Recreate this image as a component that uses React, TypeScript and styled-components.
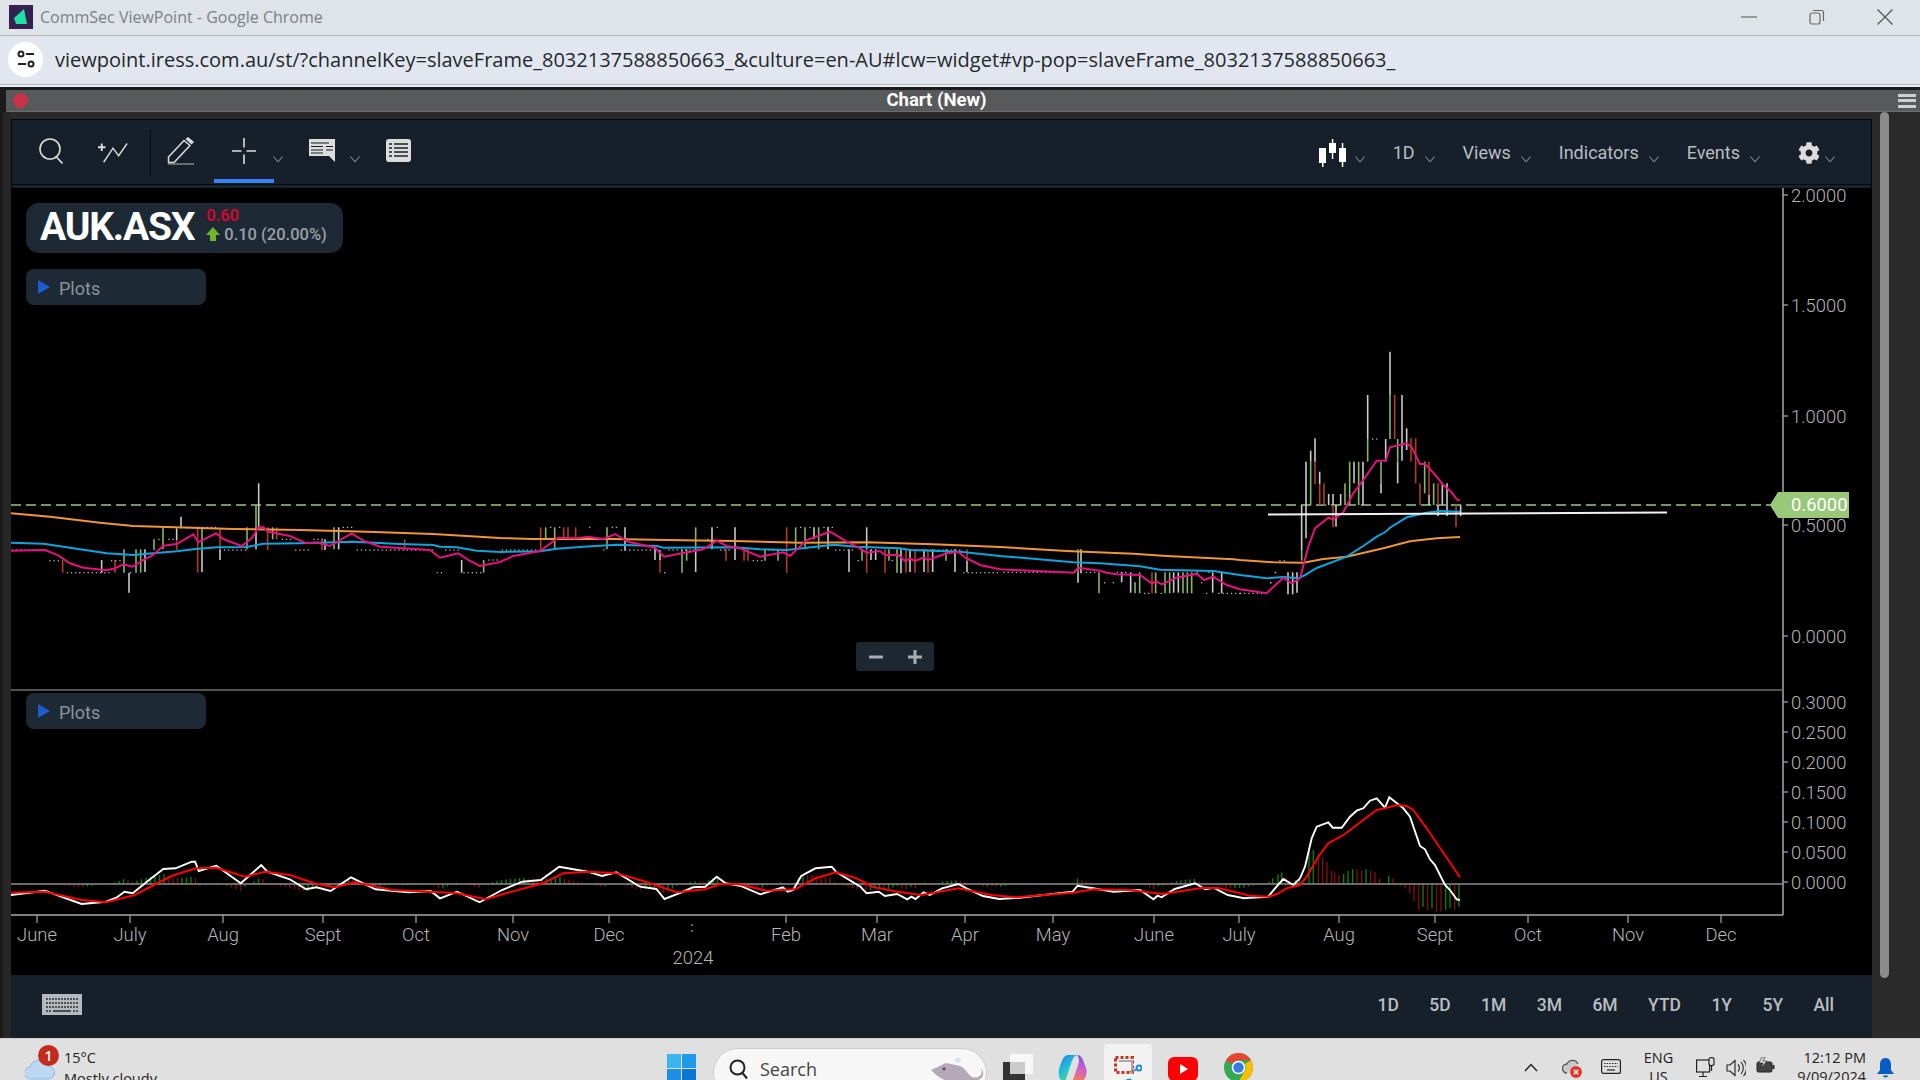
import React from "react";
import styled, { createGlobalStyle } from "styled-components";
import { FaCog } from "react-icons/fa";

type Pt = [number, number];
type Bar = [number, number, number, "w" | "g" | "r"];
type Dots = [number, number, number];

const GlobalStyle = createGlobalStyle`
  html, body { margin: 0; padding: 0; background: #000; }
  * { box-sizing: border-box; }
`;

const UI_FONT = `"Open Sans", "Noto Sans", sans-serif`;
const APP_FONT = `Roboto, "Liberation Sans", sans-serif`;

const mapPts = (ox: number, oy: number, sx: number, sy: number, pts: Pt[]): Pt[] =>
  pts.map(([x, y]) => [ox + x / sx, oy + y / sy] as Pt);
const toPoints = (pts: Pt[]) => pts.map(([x, y]) => `${x.toFixed(1)},${y.toFixed(1)}`).join(" ");

// crops of the upper pane: traced in crop pixels, then mapped to page pixels
const orange = [
  ...mapPts(0, 480, 3, 3, [[33, 100], [150, 110], [300, 128], [400, 138], [500, 141], [700, 147], [900, 150], [1100, 155], [1300, 162], [1500, 174]]),
  ...mapPts(500, 480, 3, 3, [[100, 177], [300, 176], [500, 180], [700, 183], [900, 188], [1100, 187], [1300, 193], [1500, 201]]),
  ...mapPts(1000, 500, 3, 3, [[200, 153], [400, 161], [500, 168], [700, 178]]),
  ...mapPts(1240, 330, 3, 3, [[0, 690], [100, 697], [190, 698], [250, 687], [320, 680], [430, 655], [510, 634], [590, 625], [660, 621]]),
];
const blue = [
  ...mapPts(0, 480, 3, 3, [[33, 188], [130, 191], [200, 202], [320, 220], [400, 225], [460, 220], [530, 214], [580, 208], [650, 202], [740, 201], [790, 191], [900, 190], [1060, 185], [1200, 192], [1300, 195], [1320, 200], [1370, 202], [1430, 212], [1500, 216]]),
  ...mapPts(500, 480, 3, 3, [[120, 214], [170, 206], [250, 200], [350, 194], [470, 198], [490, 203], [700, 202], [780, 208], [860, 210], [1000, 194], [1070, 200], [1200, 205], [1230, 210], [1380, 215], [1500, 228]]),
  ...mapPts(1000, 500, 3, 3, [[100, 176], [220, 187], [300, 190], [420, 199], [480, 209], [640, 213]]),
  ...mapPts(1240, 330, 3, 3, [[0, 735], [80, 745], [130, 741], [175, 745], [195, 735], [230, 714], [320, 680], [370, 648], [410, 620], [435, 607], [450, 593], [500, 562], [560, 548], [600, 543], [660, 545]]),
];
const pink = [
  ...mapPts(0, 480, 3, 3, [[33, 212], [135, 210], [175, 226], [210, 250], [250, 263], [320, 271], [345, 265], [370, 253], [398, 260], [430, 240], [460, 225], [490, 197], [530, 192], [580, 163], [595, 187], [648, 160], [670, 177], [725, 198], [755, 175], [775, 143], [790, 141], [805, 155], [870, 168], [920, 190], [950, 187], [990, 198], [1055, 160], [1090, 182], [1140, 200], [1290, 210], [1320, 233], [1375, 220], [1410, 243], [1440, 258], [1500, 246]]),
  ...mapPts(500, 480, 3, 3, [[40, 228], [120, 213], [175, 173], [230, 175], [265, 170], [310, 178], [345, 162], [385, 185], [465, 203], [492, 230], [570, 215], [610, 208], [650, 182], [680, 198], [720, 205], [780, 230], [850, 217], [870, 228], [920, 180], [990, 155], [1040, 185], [1075, 202], [1100, 218], [1140, 213], [1155, 225], [1195, 225], [1215, 243], [1230, 236], [1245, 243], [1270, 233], [1285, 240], [1340, 220], [1375, 216], [1395, 232], [1440, 255], [1500, 268]]),
  ...mapPts(1000, 500, 3, 3, [[220, 218], [235, 203], [300, 212], [320, 218], [350, 223], [420, 225], [455, 250], [470, 245], [485, 253], [530, 233], [590, 221], [612, 240], [640, 230], [680, 255]]),
  ...mapPts(1240, 330, 3, 3, [[0, 778], [80, 790], [130, 743], [155, 760], [180, 745], [205, 650], [225, 595], [265, 563], [280, 568], [310, 547], [340, 490], [370, 450], [410, 392], [437, 392], [450, 352], [500, 340], [515, 352], [540, 402], [555, 402], [580, 428], [610, 465], [635, 487], [650, 508], [660, 512]]),
];

const barsA: Bar[] = [
  [188, 240, 278, "r"], [305, 240, 278, "w"], [345, 240, 278, "r"], [372, 208, 278, "g"], [387, 278, 338, "w"], [408, 208, 278, "g"], [422, 208, 278, "g"], [435, 208, 276, "w"],
  [462, 178, 210, "g"], [489, 142, 208, "g"], [530, 145, 180, "w"], [530, 180, 210, "r"], [543, 110, 145, "w"], [593, 145, 278, "r"], [606, 208, 276, "w"], [606, 145, 208, "g"], [660, 208, 240, "w"], [660, 145, 208, "r"],
  [741, 142, 208, "g"], [768, 145, 208, "w"], [768, 75, 145, "g"], [776, 10, 145, "w"], [803, 142, 210, "r"], [818, 142, 178, "g"], [830, 142, 178, "r"], [966, 178, 210, "r"], [975, 178, 210, "w"],
  [1002, 142, 208, "g"], [1016, 142, 208, "w"], [1214, 178, 210, "r"], [1385, 240, 278, "w"], [1451, 240, 278, "g"],
];
const barsB: Bar[] = [
  [122, 142, 210, "r"], [137, 142, 178, "g"], [164, 142, 208, "g"], [191, 142, 178, "r"], [204, 142, 178, "r"], [227, 142, 178, "r"], [321, 142, 208, "g"], [375, 142, 212, "w"], [465, 200, 240, "w"], [480, 210, 240, "w"], [480, 240, 278, "r"],
  [546, 208, 278, "g"], [560, 208, 242, "g"], [587, 208, 276, "w"], [587, 142, 208, "g"], [636, 142, 208, "w"], [678, 208, 242, "r"], [705, 142, 240, "w"], [732, 208, 242, "r"], [744, 208, 242, "r"], [795, 208, 242, "g"], [834, 208, 242, "g"],
  [860, 142, 278, "r"], [887, 142, 208, "g"], [915, 142, 208, "g"], [942, 142, 178, "w"], [956, 142, 208, "g"], [984, 142, 208, "w"], [1047, 208, 276, "w"], [1086, 208, 242, "g"], [1100, 142, 208, "w"], [1100, 208, 278, "r"], [1113, 208, 240, "w"], [1127, 208, 240, "w"],
  [1155, 208, 278, "r"], [1167, 208, 242, "g"], [1191, 208, 278, "g"], [1203, 208, 280, "w"], [1218, 208, 278, "r"], [1230, 208, 276, "w"], [1245, 208, 278, "r"], [1272, 208, 276, "w"], [1284, 208, 278, "r"], [1298, 208, 276, "w"], [1338, 208, 242, "g"], [1365, 208, 276, "w"], [1401, 208, 242, "r"], [1401, 242, 276, "w"],
];
const barsC: Bar[] = [
  [234, 217, 248, "w"], [234, 148, 217, "g"], [243, 148, 220, "w"], [297, 217, 280, "g"], [365, 217, 247, "w"], [392, 217, 278, "w"], [405, 247, 280, "g"], [419, 217, 280, "g"], [456, 217, 280, "r"], [467, 217, 280, "g"], [495, 217, 280, "g"], [509, 217, 280, "g"],
  [521, 217, 278, "w"], [535, 217, 278, "w"], [549, 217, 280, "g"], [562, 217, 280, "g"], [575, 217, 280, "g"], [638, 217, 278, "w"], [665, 217, 280, "w"],
];
const barsD: Bar[] = [
  [144, 727, 793, "w"], [158, 727, 793, "w"], [171, 727, 788, "w"], [185, 525, 660, "w"], [185, 660, 692, "g"], [198, 395, 625, "w"], [212, 395, 525, "g"], [212, 362, 395, "w"], [225, 395, 462, "r"], [225, 325, 395, "w"], [239, 462, 525, "r"], [239, 425, 462, "w"], [252, 460, 525, "r"],
  [266, 492, 525, "w"], [279, 492, 525, "w"], [279, 525, 592, "r"], [288, 525, 590, "w"], [302, 492, 525, "w"], [315, 460, 525, "g"], [329, 395, 525, "g"], [342, 395, 460, "w"], [356, 395, 525, "g"], [369, 395, 525, "w"], [383, 327, 395, "g"], [383, 195, 327, "w"],
  [423, 395, 460, "g"], [423, 460, 490, "w"], [437, 327, 395, "w"], [450, 65, 195, "w"], [450, 195, 327, "g"], [464, 195, 327, "r"], [473, 395, 460, "w"], [473, 327, 395, "g"], [486, 195, 392, "w"], [500, 295, 360, "w"], [513, 325, 395, "r"], [527, 325, 460, "r"], [540, 460, 525, "r"],
  [554, 395, 490, "g"], [567, 395, 495, "r"], [567, 495, 525, "w"], [581, 460, 525, "g"], [594, 460, 525, "r"], [594, 525, 558, "w"], [607, 460, 525, "w"], [621, 460, 558, "w"], [648, 525, 592, "r"], [662, 525, 558, "w"],
];

const dotsA: Dots[] = [[210, 35, 135], [210, 672, 730], [210, 885, 925], [210, 1070, 1290], [210, 1335, 1370], [242, 148, 172], [242, 333, 360], [278, 200, 320], [278, 390, 396], [278, 1310, 1322], [278, 1390, 1440], [178, 475, 480], [178, 505, 517], [178, 845, 870], [178, 940, 960], [142, 557, 640], [142, 1028, 1055], [240, 1465, 1495]];
const dotsB: Dots[] = [[210, 5, 110], [210, 310, 312], [210, 362, 450], [210, 505, 590], [210, 660, 690], [210, 805, 850], [210, 1005, 1060], [210, 1240, 1375], [142, 150, 152], [142, 177, 179], [142, 267, 269], [142, 335, 348], [142, 650, 652], [142, 900, 902], [142, 928, 930], [142, 970, 992], [178, 218, 255], [178, 282, 295], [178, 622, 624], [242, 758, 785], [242, 1073, 1075], [242, 1175, 1177], [278, 492, 494], [278, 1390, 1495]];
const dotsC: Dots[] = [[217, 10, 220], [217, 257, 285], [217, 350, 380], [217, 590, 592], [217, 625, 627], [217, 825, 827], [248, 312, 314], [248, 338, 340], [248, 603, 605], [248, 810, 812], [280, 432, 442], [280, 482, 484], [280, 618, 620], [280, 655, 720]];
const dotsD: Dots[] = [[790, 0, 80], [758, 90, 92], [728, 104, 106], [692, 118, 131], [327, 396, 410], [525, 635, 637]];

const BAR_COLOR = { w: "#c9c9c9", g: "#86b56c", r: "#b33d1c" };

// lower pane
const macd = [
  ...mapPts(0, 840, 2.45, 3, [[27, 165], [110, 152], [150, 170], [200, 192], [260, 185], [285, 173], [305, 155], [325, 160], [360, 125], [400, 87], [430, 85], [470, 65], [478, 65], [487, 93], [530, 77], [590, 130], [640, 75], [655, 95], [710, 118], [750, 148], [775, 142], [810, 153], [860, 112], [920, 148], [1000, 157], [1055, 153], [1078, 175], [1120, 155], [1175, 187], [1230, 150], [1280, 125], [1325, 120], [1370, 80], [1440, 95], [1475, 108], [1510, 97]]),
  ...mapPts(640, 840, 2.45, 3, [[0, 140], [40, 147], [60, 177], [100, 158], [130, 142], [160, 140], [188, 110], [210, 130], [245, 137], [295, 163], [350, 142], [362, 155], [375, 150], [395, 108], [430, 85], [470, 80], [480, 95], [540, 140], [555, 160], [585, 155], [600, 168], [630, 162], [655, 178], [665, 170], [675, 177], [695, 157], [710, 165], [740, 145], [780, 132], [800, 145], [840, 168], [880, 177], [930, 173], [1060, 155], [1072, 137], [1110, 145], [1160, 155], [1225, 150], [1258, 178], [1268, 167], [1278, 172], [1310, 147], [1360, 130], [1385, 148], [1405, 143], [1440, 165], [1480, 175]]),
  ...mapPts(1250, 760, 3, 3, [[0, 413], [55, 410], [75, 385], [100, 357], [130, 375], [150, 355], [165, 320], [185, 235], [200, 200], [235, 187], [248, 203], [275, 203], [300, 170], [320, 152], [340, 145], [360, 122], [380, 115], [405, 143], [418, 112], [460, 145], [480, 170], [510, 258], [525, 268], [540, 298], [555, 315], [585, 375], [600, 390], [620, 418], [630, 420]]),
];
const signal = [
  ...mapPts(0, 840, 2.45, 3, [[27, 158], [110, 155], [200, 180], [260, 187], [330, 165], [420, 108], [480, 85], [530, 83], [600, 110], [650, 95], [710, 105], [770, 130], [820, 142], [870, 127], [960, 150], [1055, 155], [1120, 160], [1190, 178], [1240, 160], [1330, 130], [1380, 100], [1440, 95], [1510, 100]]),
  ...mapPts(640, 840, 2.45, 3, [[0, 120], [50, 140], [90, 157], [160, 148], [195, 133], [240, 132], [310, 152], [380, 148], [430, 115], [480, 97], [530, 115], [570, 140], [630, 155], [690, 165], [780, 145], [860, 165], [920, 172], [1060, 158], [1110, 148], [1200, 150], [1280, 162], [1380, 143], [1420, 145]]),
  ...mapPts(1250, 760, 3, 3, [[0, 407], [55, 410], [80, 403], [110, 385], [150, 375], [170, 350], [205, 290], [235, 250], [285, 222], [340, 180], [380, 150], [405, 145], [440, 135], [470, 138], [490, 150], [530, 205], [630, 352]]),
];

const valueAt = (line: Pt[], x: number) => {
  for (let i = 1; i < line.length; i++) {
    if (x <= line[i][0]) {
      const [x0, y0] = line[i - 1];
      const [x1, y1] = line[i];
      return y0 + ((y1 - y0) * (x - x0)) / (x1 - x0 || 1);
    }
  }
  return line[line.length - 1][1];
};

const ZERO_Y = 884;

// last swing of the histogram, read off the crop: x, tip, rising
const histEnd: [number, number, boolean][] = [
  [57, 365, true], [68, 355, true], [84, 342, true], [95, 337, true], [108, 350, false], [137, 360, true], [148, 360, true], [177, 275, true], [190, 270, true], [205, 280, false], [218, 292, false], [231, 305, false],
  [245, 333, false], [254, 338, false], [267, 345, false], [281, 342, true], [294, 333, true], [308, 328, true], [321, 328, false], [335, 332, false], [348, 328, true], [362, 332, false], [375, 337, false], [389, 355, false], [402, 368, false], [416, 347, true], [429, 355, false],
  [438, 370, false], [451, 378, false], [465, 383, false], [479, 400, false], [492, 423, false], [506, 450, false], [519, 440, true], [533, 450, false], [546, 445, true], [560, 455, false], [573, 455, false], [587, 450, true], [600, 445, true], [614, 450, false], [627, 440, true],
];

const histogram = (() => {
  const out: { x: number; top: number; up: boolean }[] = [];
  let prev = 0;
  for (let x = 20; x <= 1262; x += 4.5) {
    const h = (valueAt(signal, x) - valueAt(macd, x)) * 0.9;
    out.push({ x, top: ZERO_Y - h, up: h >= prev });
    prev = h;
  }
  histEnd.forEach(([zx, zy, up]) => out.push({ x: 1250 + zx / 3, top: 760 + zy / 3, up }));
  return out;
})();

const priceTicks: [string, number][] = [["2.0000", 195], ["1.5000", 305], ["1.0000", 416], ["0.5000", 525], ["0.0000", 636]];
const macdTicks: [string, number][] = [["0.3000", 702], ["0.2500", 732], ["0.2000", 762], ["0.1500", 792], ["0.1000", 822], ["0.0500", 852], ["0.0000", 882]];
const months: [string, number][] = [["June", 37], ["July", 130], ["Aug", 223], ["Sept", 323], ["Oct", 416], ["Nov", 513], ["Dec", 609], ["Feb", 786], ["Mar", 877], ["Apr", 965], ["May", 1053], ["June", 1154], ["July", 1239], ["Aug", 1339], ["Sept", 1435], ["Oct", 1528], ["Nov", 1628], ["Dec", 1721]];
const ranges = ["1D", "5D", "1M", "3M", "6M", "YTD", "1Y", "5Y", "All"];

const Screen = styled.div`
  width: 1920px;
  height: 1080px;
  overflow: hidden;
  display: flex;
  flex-direction: column;
  background: #000;
`;

const TitleBar = styled.header`
  height: 36px;
  flex: none;
  display: flex;
  align-items: center;
  padding: 0 27px 1px 9px;
  background: #dfe3ea;
  border-bottom: 1px solid #b4b6b9;
`;

const TitleText = styled.span`
  margin-left: 7px;
  font: 400 16px ${UI_FONT};
  color: #7d8186;
`;

const WindowButtons = styled.div`
  margin-left: auto;
  display: flex;
  align-items: center;
  gap: 52px;
`;

const AddressBar = styled.div`
  height: 49px;
  flex: none;
  display: flex;
  align-items: center;
  padding: 0 0 2px 8px;
  background: #e2e7ef;
  border-bottom: 1px solid #b4b6b9;
`;

const SiteBadge = styled.div`
  width: 35px;
  height: 35px;
  border-radius: 50%;
  background: #fff;
  display: flex;
  align-items: center;
  justify-content: center;
`;

const Url = styled.span`
  margin-left: 12px;
  font: 400 20px ${UI_FONT};
  color: #24282d;
  white-space: nowrap;
`;

const DarkStrip = styled.div`
  height: 5px;
  flex: none;
  background: #1b1b1b;
  border-top: 2px solid #e9ecf0;
`;

const PanelWrap = styled.div`
  flex: none;
  padding-left: 6px;
  background: #1b1b1b;
`;

const PanelHeader = styled.div`
  height: 22px;
  display: flex;
  align-items: center;
  padding: 0 4px 0 7px;
  background: #58595b;
  border-bottom: 1px solid #6c6d6f;
`;

const CloseDot = styled.span`
  width: 15px;
  height: 15px;
  border-radius: 50%;
  background: #c8324a;
`;

const PanelTitle = styled.div`
  flex: 1;
  padding: 0 53px 2px 0;
  text-align: center;
  font: 700 18.5px ${APP_FONT};
  color: #fff;
`;

const Hamburger = styled.div`
  width: 18px;
  height: 14px;
  display: flex;
  flex-direction: column;
  justify-content: space-between;
  span {
    height: 3px;
    background: #cfcfcf;
  }
`;

const Body = styled.div`
  flex: 1;
  min-height: 0;
  display: flex;
  background: #2a2a2a;
`;

const LeftGutter = styled.div`
  width: 11px;
  flex: none;
  background: #262626;
  border-left: 3px solid #1b1b1b;
`;

const Content = styled.div`
  width: 1861px;
  flex: none;
  padding-top: 7px;
  display: flex;
  flex-direction: column;
`;

const ScrollGutter = styled.div`
  flex: 1;
  padding-left: 8px;
`;

const ScrollThumb = styled.div`
  width: 9px;
  height: 866px;
  background: #8b8b8b;
  border-radius: 5px;
`;

const Toolbar = styled.div`
  height: 69px;
  flex: none;
  display: flex;
  align-items: center;
  padding: 0 36px 3px 27px;
  background: #17202a;
  border: solid #05090d;
  border-width: 1px 1px 0 1px;
  box-shadow: inset 0 -3px 0 #18222c, inset 0 -4px 0 #05090d;
`;

const Tool = styled.div<{ $w: number; $ml?: number; $active?: boolean }>`
  position: relative;
  width: ${(p) => p.$w}px;
  height: 60px;
  margin-left: ${(p) => p.$ml ?? 0}px;
  display: flex;
  align-items: center;
  justify-content: center;
  flex: none;
  border-bottom: 4px solid ${(p) => (p.$active ? "#3b82f6" : "transparent")};
`;

const ToolSep = styled.div`
  width: 1px;
  height: 47px;
  margin-left: 22px;
  background: #05090d;
  flex: none;
`;

const ChevronBox = styled.span<{ $ml?: number }>`
  display: inline-flex;
  margin-left: ${(p) => p.$ml ?? 0}px;
  margin-top: 13px;
  flex: none;
`;

const Menu = styled.nav`
  margin-left: auto;
  display: flex;
  align-items: center;
  gap: 28px;
`;

const MenuItem = styled.div<{ $gap?: number; $ml?: number }>`
  display: flex;
  align-items: center;
  gap: ${(p) => p.$gap ?? 10}px;
  margin-left: ${(p) => p.$ml ?? 0}px;
  font: 400 18px ${APP_FONT};
  color: #b9bdc1;
`;

const ChartArea = styled.main`
  position: relative;
  height: 787px;
  flex: none;
  background: #000;
  svg {
    display: block;
  }
`;

const SymbolCard = styled.div`
  position: absolute;
  left: 15px;
  top: 15px;
  width: 317px;
  height: 50px;
  display: flex;
  align-items: center;
  padding-left: 14px;
  background: #1d2a36;
  border-radius: 13px;
`;

const Symbol = styled.span`
  margin-top: -2px;
  font: 700 39px ${APP_FONT};
  letter-spacing: -1.2px;
  color: #fff;
  line-height: 1;
`;

const Quote = styled.div`
  margin: -7px 0 0 12px;
  display: flex;
  flex-direction: column;
  font: 500 16.5px/19px ${APP_FONT};
`;

const LastPrice = styled.span`
  color: #e4002b;
`;

const Change = styled.span`
  display: flex;
  align-items: center;
  gap: 4px;
  color: #9ba0a5;
`;

const PlotsToggle = styled.div<{ $top: number }>`
  position: absolute;
  left: 15px;
  top: ${(p) => p.$top}px;
  width: 180px;
  height: 36px;
  display: flex;
  align-items: center;
  gap: 9px;
  padding: 2px 0 0 12px;
  background: #1d2a36;
  border-radius: 8px;
  font: 400 18px ${APP_FONT};
  color: #8b9299;
`;

const PlayMark = styled.span`
  width: 0;
  height: 0;
  margin-top: -2px;
  border-left: 12px solid #1d5bd0;
  border-top: 7px solid transparent;
  border-bottom: 7px solid transparent;
`;

const ZoomControl = styled.div`
  position: absolute;
  left: 845px;
  top: 454px;
  width: 78px;
  height: 29px;
  display: flex;
  background: #1c2731;
  border-radius: 3px;
`;

const ZoomButton = styled.span`
  flex: 1;
  display: flex;
  align-items: center;
  justify-content: center;
`;

const AxisLabel = styled.text`
  font: 300 18.4px ${APP_FONT};
  fill: #b6b6b6;
`;

const TagLabel = styled.text`
  font: 400 18.4px ${APP_FONT};
  fill: #fff;
`;

const RangeBar = styled.footer`
  flex: 1;
  display: flex;
  align-items: center;
  padding: 0 38px 4px 31px;
  background: #17202a;
`;

const RangeList = styled.div`
  margin-left: auto;
  display: flex;
  gap: 30.4px;
`;

const RangeButton = styled.span`
  font: 500 17.5px ${APP_FONT};
  color: #b9bdc1;
`;

const Taskbar = styled.footer`
  height: 42px;
  flex: none;
  display: flex;
  align-items: flex-start;
  overflow: hidden;
  background: #e0e0e0;
  border-top: 1px solid #cfcfcf;
  padding-right: 26px;
`;

const Weather = styled.div`
  position: relative;
  width: 667px;
  flex: none;
  display: flex;
  padding: 8px 0 0 25px;
`;

const WeatherIcon = styled.div`
  margin-top: 2px;
  display: flex;
`;

const WeatherBadge = styled.span`
  position: absolute;
  left: 38px;
  top: 6px;
  width: 21px;
  height: 21px;
  border-radius: 50%;
  background: #c42b1c;
  color: #fff;
  font: 600 14px/21px ${UI_FONT};
  text-align: center;
`;

const WeatherText = styled.div`
  margin: 0 0 0 9px;
  font: 400 14.5px/21px ${UI_FONT};
  color: #222;
`;

const TaskIcon = styled.div<{ $ml?: number; $top?: number; $w: number }>`
  width: ${(p) => p.$w}px;
  margin: ${(p) => p.$top ?? 15}px 0 0 ${(p) => p.$ml ?? 0}px;
  flex: none;
  display: flex;
  justify-content: center;
`;

const SearchBox = styled.div`
  width: 274px;
  height: 50px;
  margin: 9px 0 0 17px;
  flex: none;
  display: flex;
  align-items: flex-start;
  gap: 12px;
  padding: 8px 0 0 15px;
  background: #f7f7f7;
  border: 1px solid #cdcdcd;
  border-radius: 25px;
  font: 400 18px/24px ${UI_FONT};
  color: #444;
`;

const SearchLabel = styled.span`
  flex: 1;
`;

const SearchArt = styled.div`
  margin-top: 1px;
  display: flex;
`;

const SnipTile = styled.div`
  width: 48px;
  height: 50px;
  margin: 5px 0 0 16px;
  flex: none;
  padding-top: 12px;
  display: flex;
  justify-content: center;
  background: #f2f2f2;
  border-radius: 4px;
`;

const Tray = styled.div`
  margin-left: auto;
  display: flex;
  align-items: flex-start;
`;

const TrayText = styled.div<{ $ml: number; $align?: string }>`
  margin: 9px 0 0 ${(p) => p.$ml}px;
  font: 400 14.5px/19px ${UI_FONT};
  color: #222;
  text-align: ${(p) => p.$align ?? "center"};
  white-space: nowrap;
`;

const Chevron = () => (
  <svg width="10" height="7" viewBox="0 0 10 7" fill="none" stroke="#9aa0a6" strokeWidth="1">
    <path d="M0.5 0.5 5 6 9.5 0.5" />
  </svg>
);

const SearchIcon = () => (
  <svg width="24" height="26" viewBox="0 0 24 26" fill="none" stroke="#dcdcdc" strokeWidth="1.6">
    <circle cx="11" cy="11" r="10" />
    <path d="M17 18.5 23.5 25.5" />
  </svg>
);

const AddPlotIcon = () => (
  <svg width="30" height="26" viewBox="0 0 32 26" fill="none" stroke="#dcdcdc">
    <path d="M4 5V13M0 9H8" strokeWidth="2" />
    <path d="M6 25 16 10 22 18 31 5" strokeWidth="1.5" />
  </svg>
);

const PencilIcon = () => (
  <svg width="27" height="28" viewBox="0 0 27 28">
    <path d="M1.5 20 17 3.5 23 8.5 7 25.5H1.5Z" fill="none" stroke="#dcdcdc" strokeWidth="1.5" />
    <path d="M18.5 2 21 0 27 5 24.5 7.5Z" fill="#dcdcdc" />
    <path d="M1 27H27" stroke="#9aa0a6" strokeWidth="1.2" />
  </svg>
);

const CrosshairIcon = () => (
  <svg width="24" height="26" viewBox="0 0 24 26" fill="none" stroke="#dcdcdc" strokeWidth="1.6">
    <path d="M12 0V9.5M12 16.5V26M0 13H9.5M14.5 13H24" />
  </svg>
);

const CommentIcon = () => (
  <svg width="26" height="23" viewBox="0 0 26 23">
    <path d="M0 0H26V23L20 17H0Z" fill="#dcdcdc" />
    <path d="M2 4H20M2 7.5H14M17 7.5H24M2 11H14M17 11H24M2 14H14" stroke="#17202a" strokeWidth="1" />
  </svg>
);

const ListIcon = () => (
  <svg width="25" height="23" viewBox="0 0 25 23">
    <rect width="25" height="23" rx="3" fill="#dcdcdc" />
    <path d="M3 5H6M8 5H22M3 9H6M8 9H22M3 13H6M8 13H22M3 17H6M8 17H22" stroke="#17202a" strokeWidth="1.3" />
  </svg>
);

const CandleIcon = () => (
  <svg width="27" height="28" viewBox="0 0 27 28" fill="#fff">
    <rect x="0" y="9" width="7" height="15" />
    <rect x="3" y="9" width="1.5" height="19" />
    <rect x="10" y="4" width="7" height="10" />
    <rect x="12.8" y="0" width="1.5" height="20" />
    <rect x="20" y="9" width="7" height="14" />
    <rect x="22.8" y="4" width="1.5" height="24" />
  </svg>
);

const KeyboardIcon = () => (
  <svg width="40" height="21" viewBox="0 0 40 21">
    <rect width="40" height="21" fill="#b5b9bd" />
    <path d="M4 5H36M4 9H36M4 13H36" stroke="#2c3238" strokeWidth="1.6" strokeDasharray="2 1" />
    <path d="M11 17H29" stroke="#2c3238" strokeWidth="1.6" />
    <path d="M4 17H9M31 17H36" stroke="#2c3238" strokeWidth="1.6" strokeDasharray="2 1" />
  </svg>
);

const ArrowUp = () => (
  <svg width="14" height="14" viewBox="0 0 14 14">
    <path d="M7 0 14 8H10V14H4V8H0Z" fill="#6fb52c" />
  </svg>
);

const AppLogo = () => (
  <svg width="24" height="24" viewBox="0 0 24 24">
    <rect width="24" height="24" fill="#35204f" />
    <path d="M5 13 15 4 18 19 7 19Z" fill="#1fe0a0" />
  </svg>
);

const TuneIcon = () => (
  <svg width="20" height="20" viewBox="0 0 20 20" fill="none" stroke="#222" strokeWidth="2">
    <circle cx="5" cy="5" r="2.5" />
    <path d="M10 5H18M2 15H10" />
    <circle cx="15" cy="15" r="2.5" />
  </svg>
);

const ChartSvg = () => {
  const renderBars = (ox: number, oy: number, bars: Bar[]) =>
    bars.map(([x, y1, y2, c], i) => (
      <line key={`${ox}-${i}`} x1={ox + x / 3} x2={ox + x / 3} y1={oy + y1 / 3} y2={oy + y2 / 3} stroke={BAR_COLOR[c]} strokeWidth="1.6" />
    ));
  const renderDots = (ox: number, oy: number, dots: Dots[]) =>
    dots.flatMap(([y, from, to], i) => {
      const n = Math.max(1, Math.round((to - from) / 12.5) + 1);
      return Array.from({ length: n }, (_, k) => (
        <rect key={`${ox}-${i}-${k}`} x={ox + (from + k * 12.5) / 3} y={oy + y / 3 - 0.6} width="1.3" height="1.3" fill="#b5b5b5" />
      ));
    });

  return (
    <svg width="1861" height="787" viewBox="11 188 1861 787">
      {/* axes */}
      <path d="M1783 188V915M11 915H1783" stroke="#a9a9a9" strokeWidth="1.5" fill="none" />
      <path d="M11 690H1783" stroke="#6f6f6f" strokeWidth="1.5" />
      {[...priceTicks, ...macdTicks].map(([label, y]) => (
        <g key={`${label}${y}`}>
          <path d={`M1783 ${y}H1788`} stroke="#a9a9a9" strokeWidth="1.2" />
          <AxisLabel x="1791" y={y + 6.5}>{label}</AxisLabel>
        </g>
      ))}
      {months.map(([label, x]) => (
        <g key={`${label}${x}`}>
          <path d={`M${x} 915V923`} stroke="#a9a9a9" strokeWidth="1.2" />
          <AxisLabel x={x} y="941" textAnchor="middle">{label}</AxisLabel>
        </g>
      ))}
      <path d="M692 924V926M692 930V932" stroke="#a9a9a9" strokeWidth="1.2" />
      <AxisLabel x="693" y="964" textAnchor="middle">2024</AxisLabel>

      {/* last price */}
      <path d="M11 505H1772" stroke="#6f9a5f" strokeWidth="2" strokeDasharray="10 5" fill="none" />

      {/* candles */}
      {renderBars(0, 480, barsA)}
      {renderBars(500, 480, barsB)}
      {renderBars(1000, 500, barsC)}
      {renderBars(1240, 330, barsD)}
      {renderDots(0, 480, dotsA)}
      {renderDots(500, 480, dotsB)}
      {renderDots(1000, 500, dotsC)}
      {renderDots(1240, 330, dotsD)}

      {/* moving averages */}
      <polyline points={toPoints(orange)} fill="none" stroke="#f0963a" strokeWidth="2" />
      <polyline points={toPoints(blue)} fill="none" stroke="#0ea5dc" strokeWidth="2" />
      <polyline points={toPoints(pink)} fill="none" stroke="#e3127f" strokeWidth="2" />

      {/* drawn trend line */}
      <path d="M1268 514.4 1667 512.6" stroke="#f2f2f2" strokeWidth="2" />

      {/* price tag */}
      <path d="M1770 505 1778 492H1849V518H1778Z" fill="#98c878" />
      <TagLabel x="1791" y="510.5">0.6000</TagLabel>

      {/* macd pane */}
      {histogram.map((b) => (
        <line key={b.x} x1={b.x} x2={b.x} y1={ZERO_Y} y2={b.top} stroke={b.up ? "#0b7d0b" : "#7d0c0c"} strokeWidth="1.4" />
      ))}
      <path d={`M11 ${ZERO_Y}H1783`} stroke="#8c8c8c" strokeWidth="1.5" />
      <polyline points={toPoints(macd)} fill="none" stroke="#fff" strokeWidth="1.9" />
      <polyline points={toPoints(signal)} fill="none" stroke="#f00" strokeWidth="2" />
    </svg>
  );
};

export default function App() {
  return (
    <Screen>
      <GlobalStyle />
      <TitleBar>
        <AppLogo />
        <TitleText>CommSec ViewPoint - Google Chrome</TitleText>
        <WindowButtons>
          <svg width="16" height="16" viewBox="0 0 16 16"><path d="M0 8H16" stroke="#777" strokeWidth="1.4" /></svg>
          <svg width="16" height="16" viewBox="0 0 16 16" fill="none" stroke="#666" strokeWidth="1.2">
            <rect x="1" y="4" width="10" height="11" rx="2" />
            <path d="M4 1.5H12.5A2 2 0 0 1 14.5 3.5V12" />
          </svg>
          <svg width="16" height="16" viewBox="0 0 16 16"><path d="M0.5 0.5 15.5 15.5M15.5 0.5 0.5 15.5" stroke="#555" strokeWidth="1.3" /></svg>
        </WindowButtons>
      </TitleBar>

      <AddressBar>
        <SiteBadge><TuneIcon /></SiteBadge>
        <Url>viewpoint.iress.com.au/st/?channelKey=slaveFrame_8032137588850663_&amp;culture=en-AU#lcw=widget#vp-pop=slaveFrame_8032137588850663_</Url>
      </AddressBar>

      <DarkStrip />
      <PanelWrap>
        <PanelHeader>
          <CloseDot />
          <PanelTitle>Chart (New)</PanelTitle>
          <Hamburger><span /><span /><span /></Hamburger>
        </PanelHeader>
      </PanelWrap>

      <Body>
        <LeftGutter />
        <Content>
          <Toolbar>
            <Tool $w={24}><SearchIcon /></Tool>
            <Tool $w={30} $ml={35}><AddPlotIcon /></Tool>
            <ToolSep />
            <Tool $w={27} $ml={16}><PencilIcon /></Tool>
            <Tool $w={60} $ml={20} $active><CrosshairIcon /></Tool>
            <ChevronBox $ml={-1}><Chevron /></ChevronBox>
            <Tool $w={26} $ml={26}><CommentIcon /></Tool>
            <ChevronBox $ml={15}><Chevron /></ChevronBox>
            <Tool $w={25} $ml={26}><ListIcon /></Tool>
            <Menu>
              <MenuItem $gap={9}><CandleIcon /><ChevronBox><Chevron /></ChevronBox></MenuItem>
              <MenuItem>1D<ChevronBox><Chevron /></ChevronBox></MenuItem>
              <MenuItem>Views<ChevronBox><Chevron /></ChevronBox></MenuItem>
              <MenuItem>Indicators<ChevronBox><Chevron /></ChevronBox></MenuItem>
              <MenuItem>Events<ChevronBox><Chevron /></ChevronBox></MenuItem>
              <MenuItem $gap={5} $ml={10}><FaCog size={22} color="#dcdcdc" /><ChevronBox><Chevron /></ChevronBox></MenuItem>
            </Menu>
          </Toolbar>

          <ChartArea>
            <ChartSvg />
            <SymbolCard>
              <Symbol>AUK.ASX</Symbol>
              <Quote>
                <LastPrice>0.60</LastPrice>
                <Change><ArrowUp />0.10 (20.00%)</Change>
              </Quote>
            </SymbolCard>
            <PlotsToggle $top={81}><PlayMark />Plots</PlotsToggle>
            <PlotsToggle $top={505}><PlayMark />Plots</PlotsToggle>
            <ZoomControl>
              <ZoomButton>
                <svg width="16" height="16" viewBox="0 0 16 16"><path d="M1 8H15" stroke="#a9adb1" strokeWidth="3" /></svg>
              </ZoomButton>
              <ZoomButton>
                <svg width="16" height="16" viewBox="0 0 16 16"><path d="M1 8H15M8 1V15" stroke="#a9adb1" strokeWidth="3" /></svg>
              </ZoomButton>
            </ZoomControl>
          </ChartArea>

          <RangeBar>
            <KeyboardIcon />
            <RangeList>
              {ranges.map((r) => (
                <RangeButton key={r}>{r}</RangeButton>
              ))}
            </RangeList>
          </RangeBar>
        </Content>
        <ScrollGutter><ScrollThumb /></ScrollGutter>
      </Body>

      <Taskbar>
        <Weather>
          <WeatherIcon>
            <svg width="30" height="34" viewBox="0 0 30 34">
              <circle cx="21" cy="8" r="6" fill="#f59f2a" />
              <path d="M6 30A6 6 0 0 1 5 18 9 9 0 0 1 22 17 6.5 6.5 0 0 1 24 30Z" fill="#bcd8f2" stroke="#8fb8e0" strokeWidth="1" />
            </svg>
          </WeatherIcon>
          <WeatherBadge>1</WeatherBadge>
          <WeatherText>15°C<br />Mostly cloudy</WeatherText>
        </Weather>

        <TaskIcon $w={29}>
          <svg width="29" height="29" viewBox="0 0 29 29">
            <rect width="14" height="14" fill="#3bb4f2" />
            <rect x="15" width="14" height="14" fill="#1e9be8" />
            <rect y="15" width="14" height="14" fill="#1a8fe3" />
            <rect x="15" y="15" width="14" height="14" fill="#0a76d0" />
          </svg>
        </TaskIcon>

        <SearchBox>
          <svg width="19" height="24" viewBox="0 0 19 24" fill="none" stroke="#222" strokeWidth="2">
            <circle cx="8.5" cy="10.5" r="7" />
            <path d="M13.5 16 18 21.5" />
          </svg>
          <SearchLabel>Search</SearchLabel>
          <SearchArt>
            <svg width="56" height="34" viewBox="0 0 56 34">
              <path d="M1 12 16 5 30 8C38 11 38 22 48 19 52 17 53 13 50 10 55 13 54 20 48 22 42 24 40 26 34 30L22 26C14 22 6 18 1 12Z" fill="#b5a8b8" />
              <circle cx="14" cy="11" r="1.4" fill="#444" />
              <circle cx="28" cy="2" r="3" fill="#cfe8f5" />
              <circle cx="6" cy="28" r="3" fill="#cfe8f5" />
            </svg>
          </SearchArt>
        </SearchBox>

        <TaskIcon $w={30} $ml={16}>
          <svg width="30" height="28" viewBox="0 0 30 28">
            <rect y="8" width="22" height="20" fill="#333" />
            <rect x="7" width="23" height="20" fill="#fff" opacity="0.75" />
          </svg>
        </TaskIcon>

        <TaskIcon $w={30} $ml={25}>
          <svg width="30" height="30" viewBox="0 0 30 30">
            <defs>
              <linearGradient id="copilotA" x1="0" y1="0" x2="0.6" y2="1">
                <stop offset="0" stopColor="#1e7fe8" />
                <stop offset="0.6" stopColor="#25c4d8" />
                <stop offset="1" stopColor="#5fd06a" />
              </linearGradient>
              <linearGradient id="copilotB" x1="0.6" y1="0" x2="0.4" y2="1">
                <stop offset="0" stopColor="#7a5ce0" />
                <stop offset="0.5" stopColor="#d060c8" />
                <stop offset="1" stopColor="#f5883c" />
              </linearGradient>
            </defs>
            <path d="M10 1H19C16 2 15 4 14 7L9 22C8 26 6 28 4 27 0 25 0 17 2 12 4 6 6 1 10 1Z" fill="url(#copilotA)" />
            <path d="M19 1C22 1 24 3 25 6L28 14C30 20 27 28 20 29H11C14 28 15 26 16 23L21 8C21 5 20 2 19 1Z" fill="url(#copilotB)" />
          </svg>
        </TaskIcon>

        <SnipTile>
          <svg width="28" height="30" viewBox="0 0 28 30" fill="none">
            <rect x="1.5" y="1.5" width="17" height="15" stroke="#c8321e" strokeWidth="3" strokeDasharray="3 2" />
            <path d="M5 5H18V18" stroke="#a8a8a8" strokeWidth="2" />
            <path d="M16 16 24 13" stroke="#8a8a8a" strokeWidth="2" />
            <circle cx="25" cy="12" r="2.5" stroke="#1c8fe0" strokeWidth="2" />
            <circle cx="15" cy="26" r="2.5" stroke="#1c8fe0" strokeWidth="2" />
          </svg>
        </SnipTile>

        <TaskIcon $w={30} $ml={16} $top={18}>
          <svg width="30" height="24" viewBox="0 0 30 24">
            <rect width="30" height="24" rx="6" fill="#f00" />
            <path d="M12 7 20 12 12 17Z" fill="#fff" />
          </svg>
        </TaskIcon>

        <TaskIcon $w={30} $ml={25} $top={14}>
          <svg width="29" height="29" viewBox="0 0 29 29">
            <circle cx="14.5" cy="14.5" r="14.5" fill="#34a853" />
            <path d="M14.5 0A14.5 14.5 0 0 1 27.1 7.3H14.5A7.2 7.2 0 0 0 7.8 11.6L2.2 7A14.5 14.5 0 0 1 14.5 0Z" fill="#ea4335" />
            <path d="M27.1 7.3A14.5 14.5 0 0 1 14.5 29L20.8 18.1A7.2 7.2 0 0 0 20.7 11Z" fill="#fbbc05" />
            <circle cx="14.5" cy="14.5" r="6.8" fill="#fff" />
            <circle cx="14.5" cy="14.5" r="5.2" fill="#3b78e7" />
          </svg>
        </TaskIcon>

        <Tray>
          <TaskIcon $w={14} $top={24}>
            <svg width="14" height="9" viewBox="0 0 14 9" fill="none" stroke="#222" strokeWidth="1.5"><path d="M1 8 7 1.5 13 8" /></svg>
          </TaskIcon>
          <TaskIcon $w={20} $ml={24} $top={18}>
            <svg width="20" height="22" viewBox="0 0 20 22">
              <path d="M5 16A4.5 4.5 0 0 1 5 7 6 6 0 0 1 16 7" fill="#c9c9c9" stroke="#555" strokeWidth="1.3" />
              <circle cx="14" cy="15" r="6" fill="#e2382f" />
              <path d="M11.8 12.8 16.2 17.2M16.2 12.8 11.8 17.2" stroke="#fff" strokeWidth="1.3" />
            </svg>
          </TaskIcon>
          <TaskIcon $w={20} $ml={19} $top={20}>
            <svg width="20" height="15" viewBox="0 0 20 15" fill="none" stroke="#222" strokeWidth="1.2">
              <rect x="0.6" y="0.6" width="18.8" height="13.8" rx="2" />
              <path d="M3 4.5H17M3 7.5H17" strokeDasharray="1.5 1.2" />
              <path d="M6 11H14" />
            </svg>
          </TaskIcon>
          <TrayText $ml={23}>ENG<br />US</TrayText>
          <TaskIcon $w={20} $ml={23} $top={18}>
            <svg width="20" height="22" viewBox="0 0 20 22" fill="none" stroke="#222" strokeWidth="1.2">
              <rect x="0.6" y="3" width="13" height="12" />
              <path d="M7 15V19M3 19.5H11" />
              <rect x="13" y="0.6" width="5" height="8" rx="2" fill="#e0e0e0" />
              <path d="M15.5 8.6V14" />
            </svg>
          </TaskIcon>
          <TaskIcon $w={20} $ml={10} $top={20}>
            <svg width="20" height="18" viewBox="0 0 20 18" fill="none" stroke="#222" strokeWidth="1.1">
              <path d="M1 6H4L9 1.5V16.5L4 12H1Z" />
              <path d="M12 5.5A5 5 0 0 1 12 12.5M15 3A9 9 0 0 1 15 15M17.5 1A12 12 0 0 1 17.5 17" />
            </svg>
          </TaskIcon>
          <TaskIcon $w={19} $ml={10} $top={18}>
            <svg width="19" height="18" viewBox="0 0 19 18">
              <rect x="1" y="5" width="15" height="10" rx="1.5" fill="#444" stroke="#222" />
              <rect x="16.5" y="8" width="2" height="4" fill="#222" />
              <path d="M6 0 3 6H7L5 11 11 4H7L9 0Z" fill="#e0e0e0" stroke="#222" strokeWidth="0.6" />
            </svg>
          </TaskIcon>
          <TrayText $ml={22} $align="right">12:12 PM<br />9/09/2024</TrayText>
          <TaskIcon $w={17} $ml={11} $top={19}>
            <svg width="17" height="21" viewBox="0 0 17 21">
              <path d="M8.5 0C12.5 0 14 3 14 7V12L17 16H0L3 12V7C3 3 4.5 0 8.5 0Z" fill="#0a5cc5" />
              <path d="M6 17.5H11C11 20 6 20 6 17.5Z" fill="#0a5cc5" />
            </svg>
          </TaskIcon>
        </Tray>
      </Taskbar>
    </Screen>
  );
}
